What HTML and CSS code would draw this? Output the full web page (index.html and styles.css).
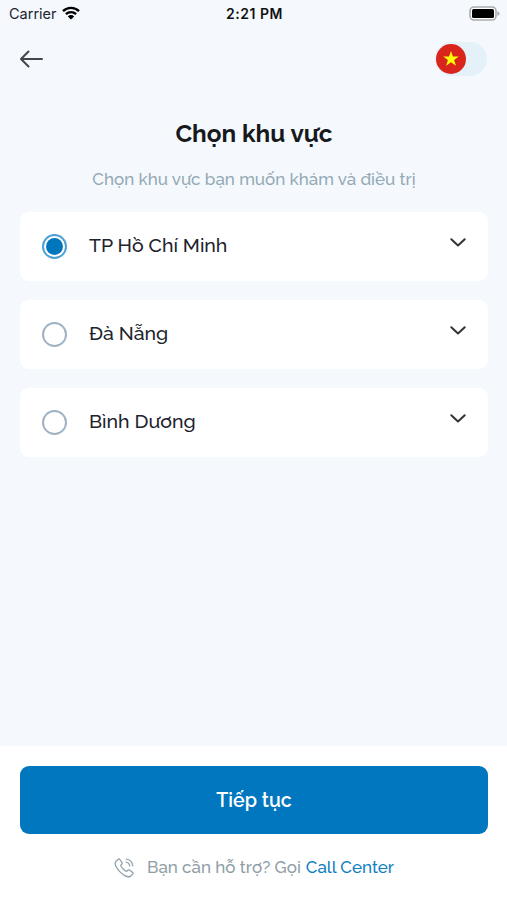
FILE: index.html
```html
<!DOCTYPE html>
<html lang="vi">
<head>
  <meta charset="UTF-8">
  <meta name="viewport" content="width=device-width, initial-scale=1.0">
  <title>Chọn khu vực</title>
  <link rel="stylesheet" href="styles.css">
</head>
<body>
  <div class="status-bar">
    <div class="carrier">
      <span>Carrier</span>
      <svg class="wifi" viewBox="0 0 18 14">
        <path d="M1 5.2a11.4 11.4 0 0 1 16 0M3.900 8.200a7.300 7.300 0 0 1 10.200 0" fill="none" stroke="#000" stroke-width="2.4"/>
        <path d="M9 13.600 5.800 10.400a4.600 4.600 0 0 1 6.400 0z"/>
      </svg>
    </div>
    <span class="time">2:21 PM</span>
    <div class="battery-wrap">
      <svg class="battery" viewBox="0 0 31 15">
        <rect x="1" y="1" width="26" height="13" rx="4" fill="#fff" stroke="#a9abad" stroke-width="1.6"/>
        <rect x="3" y="3" width="22" height="9" rx="1.5"/>
        <path d="M28.400 5v5q2.200-1 2.200-2.500T28.400 5z" fill="#a9abad"/>
      </svg>
    </div>
  </div>

  <header class="nav">
    <button class="back" aria-label="Quay lại">
      <svg viewBox="0 0 24 20">
        <path d="M22 10H1.500M8.500 2.500 1 10l7.500 7.500"/>
      </svg>
    </button>
    <div class="lang-switch">
      <svg class="flag" viewBox="0 0 30 30">
        <circle cx="15" cy="15" r="15" fill="#da251d"/>
        <path d="M15 7l1.900 5.600h5.900l-4.700 3.500 1.800 5.700-4.900-3.500-4.900 3.500 1.800-5.700-4.700-3.500h5.900z" fill="#ff0"/>
      </svg>
    </div>
  </header>

  <main class="content">
    <h1>Chọn khu vực</h1>
    <p class="subtitle">Chọn khu vực bạn muốn khám và điều trị</p>
    <div class="regions">
      <div class="region selected">
        <span class="radio"></span>
        <span class="name">TP Hồ Chí Minh</span>
        <svg class="chevron" viewBox="0 0 16 9"><path d="M1.300 1.300 8 7.500l6.700-6.200"/></svg>
      </div>
      <div class="region">
        <span class="radio"></span>
        <span class="name">Đà Nẵng</span>
        <svg class="chevron" viewBox="0 0 16 9"><path d="M1.300 1.300 8 7.500l6.700-6.200"/></svg>
      </div>
      <div class="region">
        <span class="radio"></span>
        <span class="name">Bình Dương</span>
        <svg class="chevron" viewBox="0 0 16 9"><path d="M1.300 1.300 8 7.500l6.700-6.200"/></svg>
      </div>
    </div>
  </main>

  <footer class="footer">
    <button class="continue">Tiếp tục</button>
    <div class="support">
      <svg class="phone" viewBox="0 0 20 20">
        <path d="M4.200 1.300 2 3.200C.5 5 1.500 9 5.800 13.600c4.500 4.700 8.800 6 10.900 4.500l2-2.100c.5-.6.4-1.200-.2-1.700l-3.100-2.200c-.6-.4-1.200-.3-1.700.2l-1.100 1.200c-1.800-.6-5.300-4-6-6.100l1.200-1.200c.5-.5.600-1 .2-1.600L5.800 1.500c-.4-.6-1-.7-1.600-.2z"/>
        <path d="M11.800 1.200c4 .3 6.700 3 7 7M11.600 4.200c2.500.2 4 1.700 4.200 4.200"/>
      </svg>
      <span class="help">Bạn cần hỗ trợ? Gọi</span>
      <a class="call" href="#">Call Center</a>
    </div>
  </footer>
</body>
</html>
```
FILE: styles.css
```css
* {
  box-sizing: border-box;
}
body {
  margin: 0;
  height: 900px;
  display: flex;
  flex-direction: column;
  background: #f5f9fe;
  font-family: Raleway, Lato, "Noto Sans", sans-serif;
  font-weight: 500;
  color: #20222c;
}
button {
  border: 0;
  padding: 0;
  background: none;
  font-family: inherit;
}
svg {
  display: block;
}
.status-bar {
  height: 27px;
  padding: 0 7px 0 9px;
  display: grid;
  grid-template-columns: 1fr auto 1fr;
  align-items: center;
  font: 14.5px/27px Inter, sans-serif;
}
.carrier {
  display: flex;
  align-items: center;
  gap: 5px;
}
.wifi {
  width: 18px;
  height: 14px;
  margin-bottom: 2px;
}
.time {
  color: #111;
  font-size: 14px;
  font-weight: 600;
  letter-spacing: 0.5px;
}
.battery-wrap {
  display: flex;
  justify-content: flex-end;
}
.battery {
  width: 31px;
  height: 15px;
  margin-bottom: 1px;
}
.nav {
  height: 64px;
  padding: 0 20px;
  display: flex;
  justify-content: space-between;
  align-items: center;
}
.back svg {
  width: 24px;
  height: 20px;
  fill: none;
  stroke: #43464a;
  stroke-width: 2;
  stroke-linecap: round;
  stroke-linejoin: round;
}
.lang-switch {
  width: 52px;
  height: 34px;
  padding: 2px 0 0 1px;
  border-radius: 17px;
  background: #e4f1f8;
}
.flag {
  width: 30px;
  height: 30px;
}
.content {
  flex: 1;
  padding: 27px 19px 0 20px;
}
h1 {
  margin: 0;
  font-size: 24.3px;
  line-height: 32px;
  font-weight: 700;
  text-align: center;
  color: #17191c;
}
.subtitle {
  margin: 17px 0 20px;
  font-size: 17px;
  line-height: 25px;
  text-align: center;
  color: #93a9b5;
}
.regions {
  display: flex;
  flex-direction: column;
  gap: 19px;
}
.region {
  height: 69px;
  padding: 0 22px;
  display: flex;
  align-items: center;
  background: #fff;
  border-radius: 9px;
}
.radio {
  width: 25px;
  height: 25px;
  margin-right: 22px;
  border: 2px solid #a0b2c1;
  border-radius: 50%;
}
.selected .radio {
  border-color: #4ba0d4;
  padding: 2px;
  background: #0076bd content-box;
}
.name {
  flex: 1;
  margin-bottom: 2px;
  font-size: 19.5px;
  line-height: 28px;
}
.chevron {
  width: 16px;
  height: 9px;
  margin-bottom: 8px;
  fill: none;
  stroke: #333;
  stroke-width: 2;
  stroke-linecap: round;
  stroke-linejoin: round;
}
.footer {
  height: 154px;
  padding: 20px 19px 0 20px;
  background: #fff;
}
.continue {
  width: 100%;
  height: 68px;
  border-radius: 9px;
  background: #0077be;
  color: #fff;
  font-size: 19.5px;
  font-weight: 600;
}
.support {
  margin-top: 21px;
  display: flex;
  justify-content: center;
  align-items: center;
  font-size: 17px;
  line-height: 25px;
}
.phone {
  width: 20px;
  height: 20px;
  margin-right: 13px;
  fill: none;
  stroke: #93a4ac;
  stroke-width: 1.3;
}
.help {
  margin-right: 5px;
  color: #8f9ea6;
}
.call {
  color: #0f7fc1;
  text-decoration: none;
}
```
